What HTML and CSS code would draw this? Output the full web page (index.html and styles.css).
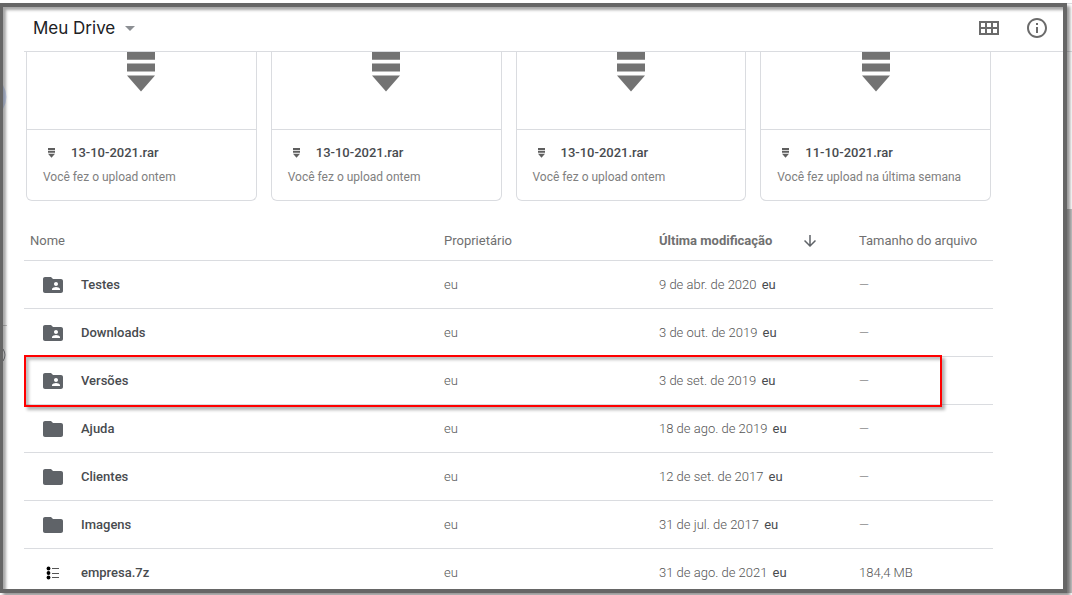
FILE: index.html
```html
<!DOCTYPE html>
<html lang="pt-BR">

<head>
    <meta charset="UTF-8">
    <meta name="viewport" content="width=device-width, initial-scale=1.0">
    <title>Meu Drive</title>
    <link rel="stylesheet" href="styles.css">
</head>

<body>
    <!-- Símbolos reutilizados -->
    <svg class="symbols" aria-hidden="true">
        <symbol id="archive" viewBox="0 0 28 40">
            <path d="M0 0h28v7.700H0zM0 11.400h28v8H0zM0 23.400h28L14 39.400z" />
        </symbol>
        <symbol id="folder" viewBox="0 0 24 24">
            <path d="M10 4H4c-1.100 0-2 .9-2 2v12c0 1.100.9 2 2 2h16c1.100 0 2-.9 2-2V8c0-1.100-.9-2-2-2h-8l-2-2z" />
        </symbol>
        <symbol id="shared" viewBox="0 0 24 24">
            <path d="M20 6h-8l-2-2H4c-1.100 0-2 .9-2 2v12c0 1.100.9 2 2 2h16c1.100 0 2-.9 2-2V8c0-1.100-.9-2-2-2zm-5 3c1.100 0 2 .9 2 2s-.9 2-2 2-2-.9-2-2 .9-2 2-2zm4 8h-8v-1c0-1.330 2.670-2 4-2s4 .67 4 2v1z" />
        </symbol>
    </svg>

    <div class="frame">
        <header class="topbar">
            <button class="path-button" type="button">
                Meu Drive
                <svg class="caret" viewBox="0 0 10 5" aria-hidden="true"><path d="M0 0h10L5 5z" /></svg>
            </button>
            <div class="actions">
                <button class="icon-button" type="button" aria-label="Layout de grade">
                    <svg viewBox="0 0 24 24"><path fill-rule="evenodd" d="M2 5h20v14H2zM4 7v4h4V7zm6 0v4h4V7zm6 0v4h4V7zM4 13v4h4v-4zm6 0v4h4v-4zm6 0v4h4v-4z" /></svg>
                </button>
                <button class="icon-button" type="button" aria-label="Ver detalhes">
                    <svg viewBox="0 0 24 24"><path d="M11 7h2v2h-2zm0 4h2v6h-2zm1-9C6.480 2 2 6.480 2 12s4.480 10 10 10 10-4.480 10-10S17.520 2 12 2zm0 18c-4.410 0-8-3.590-8-8s3.590-8 8-8 8 3.590 8 8-3.590 8-8 8z" /></svg>
                </button>
            </div>
        </header>

        <main class="content">
            <!-- Acesso rápido -->
            <section class="cards">
                <a class="card" href="#">
                    <div class="preview"><svg class="preview-icon"><use href="#archive" /></svg></div>
                    <div class="card-body">
                        <div class="card-title"><svg class="mini-icon"><use href="#archive" /></svg>13-10-2021.rar</div>
                        <div class="card-note">Você fez o upload ontem</div>
                    </div>
                </a>
                <a class="card" href="#">
                    <div class="preview"><svg class="preview-icon"><use href="#archive" /></svg></div>
                    <div class="card-body">
                        <div class="card-title"><svg class="mini-icon"><use href="#archive" /></svg>13-10-2021.rar</div>
                        <div class="card-note">Você fez o upload ontem</div>
                    </div>
                </a>
                <a class="card" href="#">
                    <div class="preview"><svg class="preview-icon"><use href="#archive" /></svg></div>
                    <div class="card-body">
                        <div class="card-title"><svg class="mini-icon"><use href="#archive" /></svg>13-10-2021.rar</div>
                        <div class="card-note">Você fez o upload ontem</div>
                    </div>
                </a>
                <a class="card" href="#">
                    <div class="preview"><svg class="preview-icon"><use href="#archive" /></svg></div>
                    <div class="card-body">
                        <div class="card-title"><svg class="mini-icon"><use href="#archive" /></svg>11-10-2021.rar</div>
                        <div class="card-note">Você fez upload na última semana</div>
                    </div>
                </a>
            </section>

            <!-- Lista de arquivos -->
            <table class="files">
                <thead>
                    <tr>
                        <th class="col-name">Nome</th>
                        <th class="col-owner">Proprietário</th>
                        <th class="col-date">
                            <button class="sort-button" type="button">
                                Última modificação
                                <svg viewBox="0 0 24 24" aria-hidden="true"><path d="M20 12l-1.410-1.410L13 16.170V4h-2v12.170l-5.580-5.590L4 12l8 8 8-8z" /></svg>
                            </button>
                        </th>
                        <th class="col-size">Tamanho do arquivo</th>
                    </tr>
                </thead>
                <tbody>
                    <tr>
                        <td><a class="file" href="#"><svg><use href="#shared" /></svg>Testes</a></td>
                        <td>eu</td>
                        <td>9 de abr. de 2020 <span class="who">eu</span></td>
                        <td>—</td>
                    </tr>
                    <tr>
                        <td><a class="file" href="#"><svg><use href="#shared" /></svg>Downloads</a></td>
                        <td>eu</td>
                        <td>3 de out. de 2019 <span class="who">eu</span></td>
                        <td>—</td>
                    </tr>
                    <tr class="marked">
                        <td><a class="file" href="#"><svg><use href="#shared" /></svg>Versões</a></td>
                        <td>eu</td>
                        <td>3 de set. de 2019 <span class="who">eu</span></td>
                        <td>—</td>
                    </tr>
                    <tr>
                        <td><a class="file" href="#"><svg><use href="#folder" /></svg>Ajuda</a></td>
                        <td>eu</td>
                        <td>18 de ago. de 2019 <span class="who">eu</span></td>
                        <td>—</td>
                    </tr>
                    <tr>
                        <td><a class="file" href="#"><svg><use href="#folder" /></svg>Clientes</a></td>
                        <td>eu</td>
                        <td>12 de set. de 2017 <span class="who">eu</span></td>
                        <td>—</td>
                    </tr>
                    <tr>
                        <td><a class="file" href="#"><svg><use href="#folder" /></svg>Imagens</a></td>
                        <td>eu</td>
                        <td>31 de jul. de 2017 <span class="who">eu</span></td>
                        <td>—</td>
                    </tr>
                    <tr>
                        <td>
                            <a class="file" href="#">
                                <svg viewBox="0 0 24 24">
                                    <g fill="#000"><circle cx="7.500" cy="7.500" r="1.900" /><circle cx="7.500" cy="12" r="1.900" /><circle cx="7.500" cy="16.500" r="1.900" /></g>
                                    <path fill="#555" d="M11 7h7v1h-7zM11 12h7v1h-7zM11 16h7v1h-7z" />
                                </svg>empresa.7z
                            </a>
                        </td>
                        <td>eu</td>
                        <td>31 de ago. de 2021 <span class="who">eu</span></td>
                        <td>184,4 MB</td>
                    </tr>
                </tbody>
            </table>
        </main>

        <!-- Restos do menu lateral -->
        <svg class="side-rest" viewBox="0 0 4 280" aria-hidden="true">
            <path fill="#d3dffa" d="M0 0Q7 12 0 24z" />
            <path fill="#c8c8c8" d="M0 240h4v1H0z" />
            <path fill="none" stroke="#85878c" d="M0 264Q4 270 0 276" />
        </svg>
    </div>

    <div class="edge"><div class="edge-head"></div><div class="scroll-thumb"></div></div>
</body>

</html>
```
FILE: styles.css
```css
:root {
    --line: #dadce0;
    --frame: #666666;
    --icon: #5f6368;
    --muted: #707070;
    --text: #484b4f;
}

* {
    box-sizing: border-box;
}

body {
    margin: 0;
    padding: 3px 0 2px;
    height: 100vh;
    display: flex;
    overflow: hidden;
    background-color: #ffffff;
    color: var(--text);
    font-family: Roboto, "Liberation Sans", sans-serif;
    font-size: 13px;
    line-height: 16px;
}

button {
    border: none;
    padding: 0;
    background: transparent;
    color: inherit;
    font: inherit;
    cursor: pointer;
}

a {
    color: inherit;
    text-decoration: none;
}

svg {
    fill: currentColor;
}

.symbols {
    position: absolute;
    width: 0;
    height: 0;
}

.frame {
    position: relative;
    z-index: 1;
    flex: 1;
    min-width: 0;
    overflow: hidden;
    border: 4px solid var(--frame);
    border-left-width: 3px;
    box-shadow: 3px 3px 3px rgba(0, 0, 0, 0.4);
}

/* sombra interna da moldura */
.frame::after {
    content: "";
    position: absolute;
    inset: 0;
    pointer-events: none;
    box-shadow: inset 3px 3px 3px rgba(0, 0, 0, 0.35);
}

/* Barra superior */
.topbar {
    display: flex;
    align-items: center;
    justify-content: space-between;
    height: 45px;
    margin-left: 21px;
    padding: 0 14px 2px 9px;
    border-bottom: 1px solid var(--line);
}

.path-button {
    display: flex;
    align-items: center;
    gap: 10px;
    color: #202124;
    font-family: Inter, Roboto, sans-serif;
    font-size: 17px;
    line-height: 24px;
}

.caret {
    width: 10px;
    height: 5px;
    color: #8c8f93;
}

.actions {
    display: flex;
    gap: 24px;
    color: #6b6b6b;
}

.icon-button,
.icon-button svg {
    display: block;
    width: 24px;
    height: 24px;
}

.content {
    padding: 0 70px 0 21px;
}

/* Cartões */
.cards {
    display: grid;
    grid-template-columns: repeat(4, 1fr);
    gap: 14px;
    margin: 0 2px;
}

.card {
    border: 1px solid var(--line);
    border-top: none;
    border-radius: 0 0 6px 6px;
}

.preview {
    height: 78px;
    overflow: hidden;
    border-bottom: 1px solid var(--line);
}

.preview-icon {
    display: block;
    width: 28px;
    height: 40px;
    margin: 0 auto;
    color: #737373;
}

.card-body {
    padding: 15px 16px;
}

.card-title {
    display: flex;
    align-items: center;
    gap: 16px;
    padding-left: 5px;
    font-weight: 500;
}

.mini-icon {
    width: 7px;
    height: 10px;
    color: #5f5f5f;
}

.card-note {
    margin-top: 8px;
    color: #808080;
    font-size: 12px;
}

/* Tabela */
.files {
    width: 100%;
    margin-top: 20px;
    table-layout: fixed;
    border-collapse: separate;
    border-spacing: 0;
}

.files th,
.files td {
    padding: 0;
    border-bottom: 1px solid var(--line);
    color: var(--muted);
    text-align: left;
}

.files th {
    height: 40px;
    font-weight: 400;
}

.files td {
    height: 48px;
    color: #555555;
    font-weight: 300;
}

.files .col-name {
    padding-left: 6px;
}

.col-owner {
    width: 215px;
}

.col-date {
    width: 200px;
}

.col-size {
    width: 134px;
}

.sort-button {
    display: flex;
    align-items: center;
    justify-content: space-between;
    width: 160px;
    font-weight: 700;
}

.sort-button svg {
    width: 18px;
    height: 18px;
    color: var(--icon);
}

.file {
    display: flex;
    align-items: center;
    gap: 16px;
    padding-left: 17px;
    color: var(--text);
    font-weight: 500;
}

.file svg {
    width: 24px;
    height: 24px;
    color: var(--icon);
}

.who {
    margin-left: 2px;
    color: var(--text);
    font-weight: 400;
}

.marked {
    position: relative;
}

.marked td:first-child::after {
    content: "";
    position: absolute;
    inset: -2px 51px -2px 0;
    border: 2px solid #ff0000;
    box-shadow: 3px 3px 3px rgba(0, 0, 0, 0.3), inset 3px 3px 3px rgba(0, 0, 0, 0.25);
    pointer-events: none;
}

.side-rest {
    position: absolute;
    top: 78px;
    left: 0;
    width: 4px;
    height: 280px;
}

/* Faixa à direita */
.edge {
    display: flex;
    flex-direction: column;
    width: 5px;
    border-top: 1px solid var(--line);
}

.edge-head {
    height: 48px;
    border-bottom: 1px solid var(--line);
}

.scroll-thumb {
    flex: 1;
    margin-top: 157px;
    background-color: #c1c1c1;
}
```
